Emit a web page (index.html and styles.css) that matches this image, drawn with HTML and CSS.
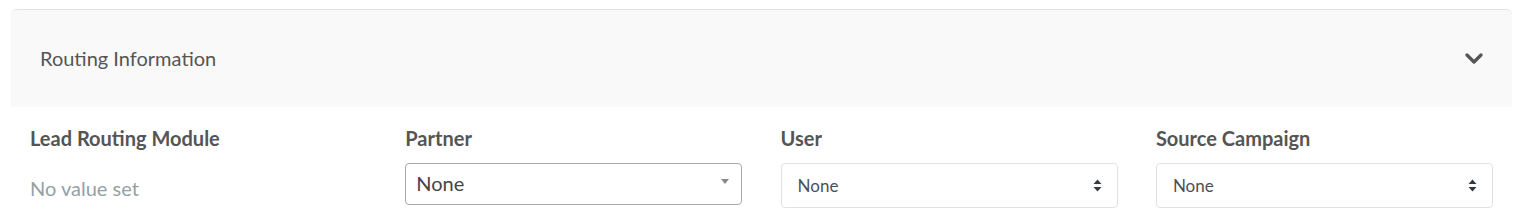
FILE: index.html
```html
<!DOCTYPE html>
<html lang="en">
<head>
    <meta charset="UTF-8">
    <title>Routing Information</title>
    <link rel="stylesheet" href="styles.css">
</head>
<body>
    <div class="panel">
        <div class="panel-heading">
            <span class="panel-title">Routing Information</span>
            <svg class="chevron" width="18" height="12" viewBox="0 0 18 12">
                <path d="M2 2 L9 9 L16 2" fill="none" stroke="#555" stroke-width="3.2" stroke-linecap="round" stroke-linejoin="round"/>
            </svg>
        </div>
        <div class="panel-body">
            <div class="field">
                <div class="field-label">Lead Routing Module</div>
                <div class="no-value">No value set</div>
            </div>
            <div class="field">
                <div class="field-label">Partner</div>
                <div class="select2">
                    <span>None</span>
                    <span class="caret"></span>
                </div>
            </div>
            <div class="field">
                <div class="field-label">User</div>
                <div class="custom-select">
                    <span>None</span>
                    <svg width="9" height="13" viewBox="0 0 9 13">
                        <path d="M4.5 0.5 L8.5 5 L0.5 5 Z M0.5 8 L8.5 8 L4.5 12.5 Z" fill="#343a40"/>
                    </svg>
                </div>
            </div>
            <div class="field">
                <div class="field-label">Source Campaign</div>
                <div class="custom-select">
                    <span>None</span>
                    <svg width="9" height="13" viewBox="0 0 9 13">
                        <path d="M4.5 0.5 L8.5 5 L0.5 5 Z M0.5 8 L8.5 8 L4.5 12.5 Z" fill="#343a40"/>
                    </svg>
                </div>
            </div>
        </div>
    </div>
</body>
</html>
```

FILE: styles.css
```css
body { margin: 0; padding-top: 9px; font-family: Lato, "Open Sans", sans-serif; background: #fff; }

.panel { margin-left: 11px; width: 1501px; }

.panel-heading {
    display: flex;
    align-items: center;
    justify-content: space-between;
    height: 97px;
    padding: 0 29px 0 29px;
    background: #f9f9f9;
    border-top: 1px solid #e2e2e2;
    border-radius: 6px 6px 0 0;
}
.panel-title { font-size: 20px; color: #555; margin-top: -2px; }
.chevron { display: block; margin-top: 1px; }

.panel-body {
    display: grid;
    grid-template-columns: repeat(4, 337px);
    column-gap: 38.3px;
    padding: 18px 0 0 19px;
}

.field-label {
    font-size: 20px;
    font-weight: bold;
    color: #555;
    line-height: 26px;
    margin-bottom: 12px;
}
.no-value { font-size: 20px; color: #95a0a6; line-height: 26px; padding-top: 12px; }

.select2 {
    display: flex;
    align-items: center;
    justify-content: space-between;
    box-sizing: border-box;
    height: 42px;
    padding: 0 12px 3px 10px;
    border: 1px solid #aaa;
    border-radius: 4px;
    font-size: 20px;
    color: #444;
}
.caret {
    width: 0;
    height: 0;
    border-left: 4px solid transparent;
    border-right: 4px solid transparent;
    border-top: 5px solid #888;
    margin-top: -2px;
}

.custom-select {
    display: flex;
    align-items: center;
    justify-content: space-between;
    box-sizing: border-box;
    height: 45px;
    padding: 0 15px 1px 16px;
    border: 1px solid #dee2e6;
    border-radius: 4px;
    font-size: 17px;
    color: #495057;
}
.custom-select svg { display: block; margin-top: 1px; }
```
